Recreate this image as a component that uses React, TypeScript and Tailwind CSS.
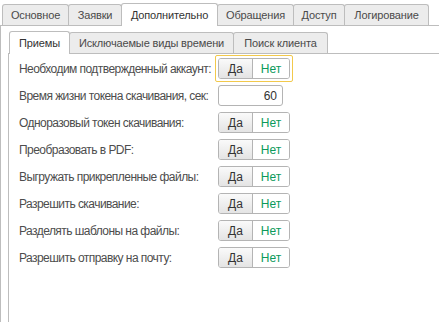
import React from 'react';

const outerTabs = [
    { title: 'Основное', width: 'w-[67px]' },
    { title: 'Заявки', width: 'w-[54px]' },
    { title: 'Дополнительно', width: 'w-[97px]', active: true },
    { title: 'Обращения', width: 'w-[77px]' },
    { title: 'Доступ', width: 'w-[52px]' },
    { title: 'Логирование', width: 'w-[85px]' },
];

const innerTabs = [
    { title: 'Приемы', width: 'w-[61px]', active: true },
    { title: 'Исключаемые виды времени', width: 'w-[165px]' },
    { title: 'Поиск клиента', width: 'w-[95px]' },
];

const toggles = [
    'Одноразовый токен скачивания:',
    'Преобразовать в PDF:',
    'Выгружать прикрепленные файлы:',
    'Разрешить скачивание:',
    'Разделять шаблоны на файлы:',
    'Разрешить отправку на почту:',
];

function Tab({ title, width, active }: { title: string; width: string; active?: boolean }) {
    return (
        <div
            className={
                'relative -mr-px flex shrink-0 items-center justify-center rounded-t-[3px] border border-b-0 border-[#bdbdbd] ' +
                width +
                (active ? ' z-10 -mb-px h-[23px] bg-white text-[#333]' : ' h-[21px] bg-[#ececec] text-[#4a4a4a]')
            }
        >
            {title}
        </div>
    );
}

function YesNo({ focused }: { focused?: boolean }) {
    return (
        <div className={focused ? 'rounded-[2px] border border-[#f2c94c] p-[2px]' : 'p-[3px]'}>
            <div className="flex h-[21px] w-[72px] overflow-hidden rounded-[3px] border border-[#b4b4b4] text-[12px] tracking-normal">
                <div className="flex w-[34px] items-center justify-center border-r border-[#b4b4b4] bg-gradient-to-b from-[#fafafa] to-[#e4e4e4] text-[#333]">
                    Да
                </div>
                <div className="flex flex-1 items-center justify-center bg-white text-[#0c9a5b]">Нет</div>
            </div>
        </div>
    );
}

function Row({ label, children }: { label: string; children: React.ReactNode }) {
    return (
        <div className="flex h-[27px] items-center">
            <div className="w-[206px] shrink-0 pl-[10px] text-[12px] tracking-[-0.55px] whitespace-nowrap text-[#4d4d4d]">
                {label}
            </div>
            {children}
        </div>
    );
}

export default function App() {
    return (
        <div
            className="h-[322px] w-[439px] overflow-hidden bg-white text-[11px] leading-none tracking-[-0.15px]"
            style={{ fontFamily: '"Liberation Sans", Arial, sans-serif' }}
        >
            {/* Outer tabs */}
            <div className="flex h-[25px] items-end pl-[2px]">
                {outerTabs.map((t) => (
                    <Tab key={t.title} {...t} />
                ))}
            </div>

            <div className="flex h-[297px] flex-col border-t border-l border-[#bdbdbd] pt-[5px] pl-[7px]">
                {/* Inner tabs */}
                <div className="flex h-[22px] items-end pl-px">
                    {innerTabs.map((t) => (
                        <Tab key={t.title} {...t} />
                    ))}
                </div>

                <div className="flex-1 border-t border-l border-[#bdbdbd] pt-px">
                    <Row label="Необходим подтвержденный аккаунт:">
                        <YesNo focused />
                    </Row>
                    <Row label="Время жизни токена скачивания, сек:">
                        <div className="ml-[3px] flex h-[21px] w-[65px] items-center justify-end rounded-[3px] border border-[#b4b4b4] pr-[5px] text-[12px] tracking-normal text-[#333]">
                            60
                        </div>
                    </Row>
                    {toggles.map((label) => (
                        <Row key={label} label={label}>
                            <YesNo />
                        </Row>
                    ))}
                </div>
            </div>
        </div>
    );
}
